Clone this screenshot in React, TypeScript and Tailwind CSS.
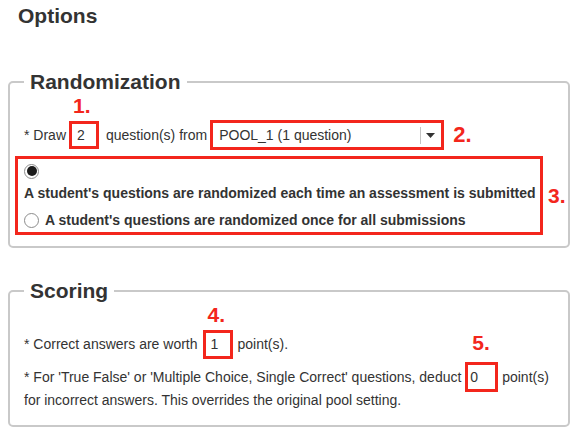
const Radio = ({ checked = false }: { checked?: boolean }) => (
  <span className="w-[15px] h-[15px] shrink-0 rounded-full border border-[#8c8c8c] bg-white flex items-center justify-center">
    {checked && <span className="w-[10px] h-[10px] rounded-full bg-[#1c1c1c]" />}
  </span>
);

const Marker = ({ label, className }: { label: string; className: string }) => (
  <span className={`absolute text-[21px] leading-[24px] font-bold text-[#f3261c] ${className}`}>
    {label}
  </span>
);

export default function App() {
  return (
    <div className="w-[582px] h-[437px] bg-white text-[#333] text-[14px] font-['Liberation_Sans',Arial,sans-serif] overflow-hidden">
      <h1 className="pl-[18px] pt-1 text-[21px] leading-[24px] font-bold">Options</h1>

      <fieldset className="ml-2 mt-[42px] w-[562px] border-2 border-[#c9c9c9] rounded-[5px] pl-[14px] pt-[26px] pb-[11px]">
        <legend className="px-[6px] text-[21px] leading-[24px] font-bold">Randomization</legend>

        <div className="flex items-center h-[30px]">
          <span>* Draw</span>
          <div className="relative ml-[3px] w-[30px] h-[28px] border-[3px] border-[#f3261c] pl-[5px] flex items-center">
            2
            <Marker label="1." className="-top-[30px] left-[1px]" />
          </div>
          <span className="ml-[7px]">question(s) from</span>
          <div className="ml-[3px] w-[234px] h-[30px] border-[3px] border-[#f3261c] flex items-center">
            <span className="flex-1 pl-[6px]">POOL_1 (1 question)</span>
            <span className="w-px h-[17px] bg-[#c4c4c4]" />
            <span className="w-[20px] pl-[5px]">
              <svg width="9" height="5" viewBox="0 0 9 5" className="block">
                <path d="M0 0h9L4.5 5z" fill="#333" />
              </svg>
            </span>
          </div>
          <span className="ml-[9px] text-[22px] leading-[24px] font-bold text-[#f3261c]">2.</span>
        </div>

        <div className="flex items-center mt-[6px] -ml-[9px]">
          <div className="w-[528px] border-[3px] border-[#f3261c] pl-[6px] flex flex-col font-bold">
            <div className="h-[24px] flex items-center">
              <Radio checked />
            </div>
            <div className="leading-[20px]">
              A student's questions are randomized each time an assessment is submitted
            </div>
            <div className="h-[24px] mt-[5px] flex items-center gap-[6px]">
              <Radio />
              <span className="leading-[18px]">A student's questions are randomized once for all submissions</span>
            </div>
          </div>
          <span className="ml-[5px] text-[21px] leading-[24px] font-bold text-[#f3261c]">3.</span>
        </div>
      </fieldset>

      <fieldset className="ml-2 mt-[31px] w-[562px] border-2 border-[#c9c9c9] rounded-[5px] pl-[14px] pt-[27px] pb-[13px]">
        <legend className="px-[6px] text-[21px] leading-[24px] font-bold">Scoring</legend>

        <div className="flex items-center h-[29px]">
          <span>* Correct answers are worth</span>
          <div className="relative ml-[5px] w-[30px] h-[29px] border-[3px] border-[#f3261c] pl-[5px] flex items-center">
            1
            <Marker label="4." className="-top-[30px] left-[2px]" />
          </div>
          <span className="ml-[5px]">point(s).</span>
        </div>

        <p className="mt-[7px] leading-[23px]">
          * For 'True False' or 'Multiple Choice, Single Correct' questions, deduct{" "}
          <span className="relative inline-block align-baseline w-[33px] h-[30px] -my-[4px] border-[3px] border-[#f3261c] pl-[2px] leading-[24px]">
            0
            <Marker label="5." className="-top-[34px] left-[4px]" />
          </span>{" "}
          point(s)
          <br />
          for incorrect answers. This overrides the original pool setting.
        </p>
      </fieldset>
    </div>
  );
}
